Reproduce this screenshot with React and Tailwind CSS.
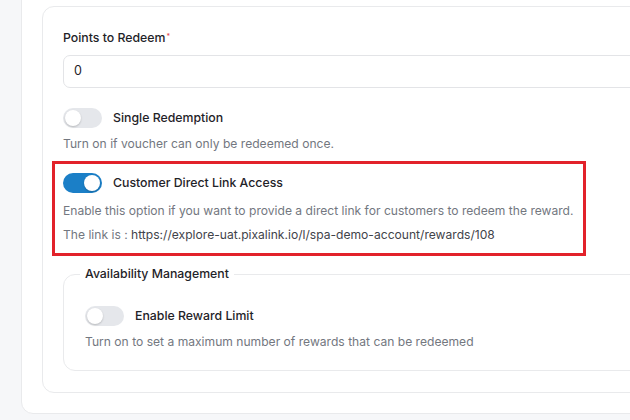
import React from "react";

function Toggle({ on }) {
  return (
    <div
      className={
        "relative h-[20px] w-[39px] shrink-0 rounded-full " +
        (on ? "bg-[#1b7fc7]" : "bg-[#e5e7eb]")
      }
    >
      <div
        className={
          "absolute top-[2px] h-[16px] w-[16px] rounded-full bg-white shadow-[0_1px_2px_rgba(0,0,0,0.2)] " +
          (on ? "left-[21px]" : "left-[2px]")
        }
      />
    </div>
  );
}

export default function App() {
  return (
    <div
      className="h-[420px] w-[630px] overflow-hidden bg-[#f6f7f9] pl-[21px]"
      style={{ fontFamily: "Inter, 'Noto Sans', sans-serif" }}
    >
      <div className="-mt-[14px] w-[700px] rounded-[12px] border border-[#e9eaec] bg-white pl-[20px] pt-[19px] pb-[20px]">
        <div className="rounded-[12px] border border-[#e9eaec] bg-white pl-[20px] pt-[23px] pb-[21px]">
          <div className="text-[12.3px] leading-[16px] font-medium text-[#1f2328]">
            Points to Redeem
            <sup className="ml-[1px] text-[7px] text-[#e5484d]">*</sup>
          </div>
          <div className="mt-[9px] flex h-[33px] items-center rounded-[7px] border border-[#e3e4e7] px-[10px] text-[12.5px] text-[#1f2328]">
            0
          </div>

          <div className="mt-[20px] flex items-center gap-[11px]">
            <Toggle on={false} />
            <span className="text-[12.3px] leading-[16px] font-medium text-[#1f2328]">
              Single Redemption
            </span>
          </div>
          <div className="mt-[8px] text-[12.1px] leading-[16px] text-[#737780]">
            Turn on if voucher can only be redeemed once.
          </div>

          <div className="-ml-[11px] mt-[9px] w-[534px] border-[3px] border-[#e2222a] pl-[8px] pt-[9px] pb-[10px]">
            <div className="flex items-center gap-[11px]">
              <Toggle on={true} />
              <span className="text-[12.3px] leading-[16px] font-medium text-[#1f2328]">
                Customer Direct Link Access
              </span>
            </div>
            <div className="mt-[10px] whitespace-nowrap text-[12.1px] leading-[16px] text-[#737780]">
              Enable this option if you want to provide a direct link for customers to redeem the reward.
            </div>
            <div className="mt-[8px] whitespace-nowrap text-[12.1px] leading-[16px] text-[#737780]">
              The link is :{" "}
              <span className="text-[#3f434a]">
                https://explore-uat.pixalink.io/l/spa-demo-account/rewards/108
              </span>
            </div>
          </div>

          <fieldset className="mt-[10px] rounded-[12px] border border-[#e9eaec] pl-[21px] pb-[20px]">
            <legend className="-ml-[5px] px-[5px] text-[12.3px] leading-[16px] font-medium text-[#1f2328]">
              Availability Management
            </legend>
            <div className="mt-[24px] flex items-center gap-[11px]">
              <Toggle on={false} />
              <span className="text-[12.3px] leading-[16px] font-medium text-[#1f2328]">
                Enable Reward Limit
              </span>
            </div>
            <div className="mt-[8px] text-[12.1px] leading-[16px] text-[#737780]">
              Turn on to set a maximum number of rewards that can be redeemed
            </div>
          </fieldset>
        </div>
      </div>
    </div>
  );
}
